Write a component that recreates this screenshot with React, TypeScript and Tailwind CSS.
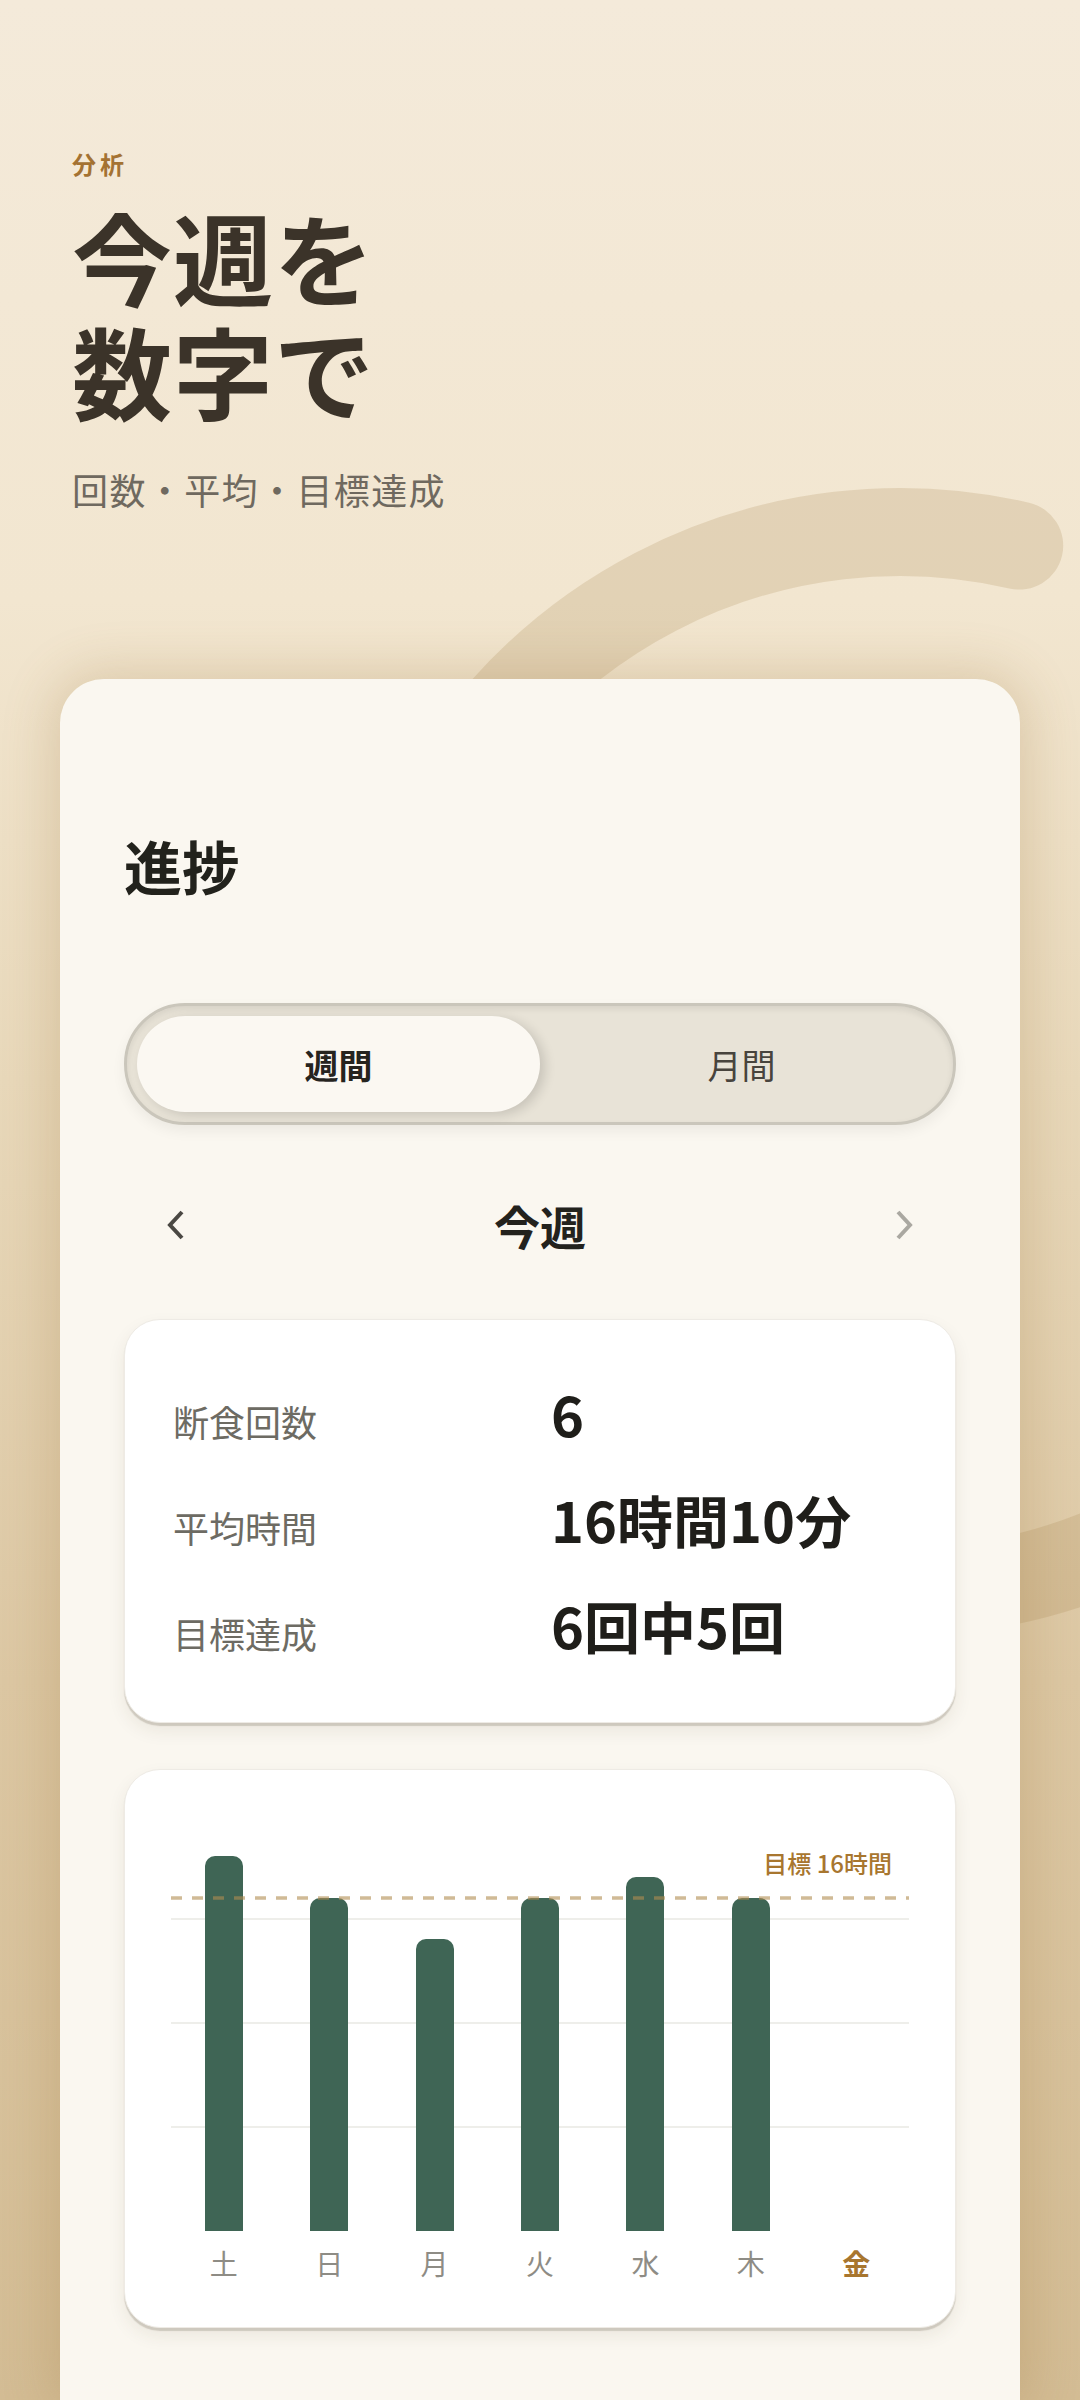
import React from "react";

const days: { d: string; h: number; today?: boolean }[] = [
  { d: "土", h: 18 },
  { d: "日", h: 16 },
  { d: "月", h: 14 },
  { d: "火", h: 16 },
  { d: "水", h: 17 },
  { d: "木", h: 16 },
  { d: "金", h: 0, today: true },
];
const MAX = 18;
const CH = 375;

const stats = [
  { label: "断食回数", value: "6" },
  { label: "平均時間", value: "16時間10分" },
  { label: "目標達成", value: "6回中5回" },
];

export default function App() {
  return (
    <div className="relative flex h-[2400px] w-[1080px] flex-col overflow-hidden bg-[linear-gradient(180deg,#f4eada_0%,#f2e6d0_25%,#e8d8ba_45%,#dcc7a3_70%,#d3bc94_100%)] font-['Noto_Sans_CJK_JP','Noto_Sans',sans-serif]">
      <svg
        className="pointer-events-none absolute left-0 top-0"
        width="1080"
        height="2400"
        viewBox="0 0 1080 2400"
      >
        <path
          d="M 1019.2 545.6 A 530 530 0 1 0 1306 1402.7"
          fill="none"
          stroke="rgba(165,130,75,0.2)"
          strokeWidth="88"
          strokeLinecap="round"
        />
      </svg>

      <header className="relative z-10 pl-[72px] pt-[149px]">
        <div className="text-[24px] font-bold leading-[30px] tracking-[4px] text-[#a47232]">
          分析
        </div>
        <h1 className="mt-[20px] text-[100px] font-bold leading-[114px] tracking-[1px] text-[#3b3329]">
          <span className="block">今週を</span>
          <span className="block">数字で</span>
        </h1>
        <p className="mt-[38px] text-[36px] leading-[48px] tracking-[1.4px] text-[#6f695f]">
          回数・平均・目標達成
        </p>
      </header>

      <main className="relative z-10 mx-[60px] mt-[166px] flex-1 rounded-t-[44px] bg-[#faf7f0] px-16 pt-[149px] shadow-[0_0_50px_8px_rgba(150,110,50,0.22)]">
        <h2 className="text-[58px] font-bold leading-[75px] text-[#22221c]">進捗</h2>

        <div className="mt-[100px] flex h-[122px] rounded-full border-[3px] border-[#cac6bb] bg-[#e8e3d7] p-[10px] shadow-[inset_0_3px_6px_rgba(0,0,0,0.08),0_6px_14px_rgba(0,0,0,0.06)]">
          <div className="flex flex-1 items-center justify-center rounded-full bg-[#fbf8f2] text-[34px] font-semibold text-[#26241f] shadow-[5px_3px_12px_rgba(0,0,0,0.14)]">
            週間
          </div>
          <div className="flex flex-1 items-center justify-center text-[34px] text-[#48443d]">
            月間
          </div>
        </div>

        <div className="mt-[50px] flex h-[100px] items-center justify-between px-[42px]">
          <svg width="20" height="32" viewBox="0 0 20 32">
            <polyline points="16,3 4,16 16,29" fill="none" stroke="#4a4843" strokeWidth="4" />
          </svg>
          <div className="text-[46px] font-bold leading-[46px] text-[#23221d]">今週</div>
          <svg width="20" height="32" viewBox="0 0 20 32">
            <polyline points="4,3 16,16 4,29" fill="none" stroke="#aaa8a1" strokeWidth="4" />
          </svg>
        </div>

        <section className="mt-[44px] rounded-[36px] border border-[#eeebe5] bg-white pb-[44px] pl-[48px] pt-[40px] shadow-[0_3px_1px_rgba(60,50,30,0.18),0_8px_18px_rgba(60,50,30,0.08)]">
          {stats.map((s) => (
            <div key={s.label} className="flex h-[106px] items-baseline">
              <span className="w-[378px] text-[36px] leading-none text-[#6d6b63]">{s.label}</span>
              <span className="text-[56px] font-semibold leading-[106px] text-[#1f1e1a]">{s.value}</span>
            </div>
          ))}
        </section>

        <section className="mt-[46px] rounded-[36px] border border-[#eeebe5] bg-white px-[46px] pb-[44px] pt-[86px] shadow-[0_3px_1px_rgba(60,50,30,0.18),0_8px_18px_rgba(60,50,30,0.08)]">
          <div className="relative h-[375px]">
            <div className="absolute left-0 right-0 top-[61.5px] h-[2px] bg-[#eeeeea]" />
            <div className="absolute left-0 right-0 top-[165.5px] h-[2px] bg-[#eeeeea]" />
            <div className="absolute left-0 right-0 top-[270px] h-[2px] bg-[#eeeeea]" />
            <div className="relative flex h-full items-end">
              {days.map((d) => (
                <div key={d.d} className="flex h-full flex-1 items-end justify-center">
                  {d.h > 0 && (
                    <div
                      className="w-[38px] rounded-t-[10px] bg-[#3f6555]"
                      style={{ height: `${(d.h / MAX) * CH}px` }}
                    />
                  )}
                </div>
              ))}
            </div>
            <svg className="absolute left-0 top-[40px]" width="738" height="4" viewBox="0 0 738 4">
              <line
                x1="0"
                y1="2"
                x2="738"
                y2="2"
                stroke="rgba(176,140,80,0.6)"
                strokeWidth="3.5"
                strokeDasharray="11 10"
              />
            </svg>
            <div className="absolute right-[17px] top-[-5px] text-[24px] font-medium leading-[24px] text-[#a8762f]">
              目標 16時間
            </div>
          </div>
          <div className="mt-[12px] flex">
            {days.map((d) => (
              <div
                key={d.d}
                className={
                  d.today
                    ? "flex-1 text-center text-[28px] font-semibold leading-[40px] text-[#a8762f]"
                    : "flex-1 text-center text-[28px] leading-[40px] text-[#8e8c85]"
                }
              >
                {d.d}
              </div>
            ))}
          </div>
        </section>
      </main>
    </div>
  );
}
